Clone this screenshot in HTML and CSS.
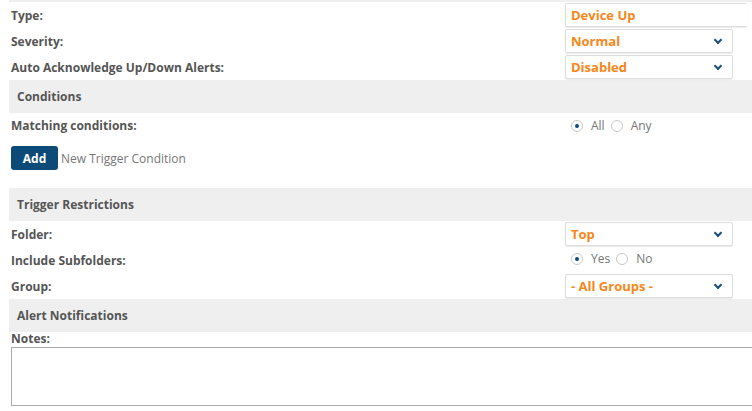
FILE: index.html
```html
<!DOCTYPE html>
<html lang="en">
<head>
  <meta charset="UTF-8" />
  <title>Trigger</title>
  <link rel="stylesheet" href="styles.css">
</head>
<body>
  <div class="form">
    <div class="strip"></div>

    <div class="row">
      <div class="label">Type:</div>
      <div class="value"><div class="select wide">Device Up</div></div>
    </div>
    <div class="row">
      <div class="label">Severity:</div>
      <div class="value"><div class="select">Normal<span class="chev"></span></div></div>
    </div>
    <div class="row">
      <div class="label">Auto Acknowledge Up/Down Alerts:</div>
      <div class="value"><div class="select">Disabled<span class="chev"></span></div></div>
    </div>

    <div class="section">Conditions</div>
    <div class="row short">
      <div class="label">Matching conditions:</div>
      <div class="value radios">
        <span class="radio checked"></span><span class="opt">All</span>
        <span class="radio"></span><span class="opt">Any</span>
      </div>
    </div>
    <div class="add-row">
      <button class="btn">Add</button>
      <span class="hint">New Trigger Condition</span>
    </div>

    <div class="section">Trigger Restrictions</div>
    <div class="row">
      <div class="label">Folder:</div>
      <div class="value"><div class="select">Top<span class="chev"></span></div></div>
    </div>
    <div class="row">
      <div class="label">Include Subfolders:</div>
      <div class="value radios up">
        <span class="radio checked"></span><span class="opt">Yes</span>
        <span class="radio"></span><span class="opt">No</span>
      </div>
    </div>
    <div class="row">
      <div class="label">Group:</div>
      <div class="value"><div class="select">- All Groups -<span class="chev"></span></div></div>
    </div>

    <div class="section">Alert Notifications</div>
    <div class="notes-label">Notes:</div>
    <div class="notes"></div>
  </div>
</body>
</html>
```

FILE: styles.css
```css
body {
  margin: 0;
  background: #fff;
  font-family: "Open Sans", Arial, sans-serif;
  font-size: 12px;
  color: #555;
  overflow: hidden;
}

.form {
  margin-left: 9px;
  width: 745px;
}

.strip {
  height: 2px;
  background: #efefef;
}

.row {
  display: flex;
  align-items: center;
  height: 26px;
  padding-left: 2px;
}

.row.short {
  height: 24px;
  padding-bottom: 1px;
}

.label {
  width: 554px;
  font-weight: bold;
  color: #555;
}

.value {
  display: flex;
  align-items: center;
}

.select {
  position: relative;
  box-sizing: border-box;
  width: 168px;
  height: 24px;
  line-height: 22px;
  padding-left: 5px;
  border: 1px solid #ddd;
  border-radius: 2px;
  box-shadow: 0 1px 1px rgba(0, 0, 0, 0.08);
  color: #f7861b;
  font-weight: bold;
  font-size: 13px;
}

.select.wide {
  width: 182px;
  border-right: none;
}

.chev {
  position: absolute;
  right: 11px;
  top: 7px;
  width: 4px;
  height: 4px;
  border-right: 2px solid #1d4f7a;
  border-bottom: 2px solid #1d4f7a;
  transform: rotate(45deg);
}

.section {
  height: 33px;
  line-height: 33px;
  padding-left: 8px;
  background: #efefef;
  font-weight: bold;
  color: #555;
}

.radios {
  padding-left: 6px;
}

.radios.up {
  margin-top: -3px;
}

.radio {
  box-sizing: border-box;
  width: 12px;
  height: 12px;
  border: 1px solid #c8c8c8;
  border-radius: 50%;
  position: relative;
  margin-top: 1px;
}

.radio.checked::after {
  content: "";
  position: absolute;
  left: 3px;
  top: 3px;
  width: 4px;
  height: 4px;
  border-radius: 50%;
  background: #0e4a78;
}

.opt {
  margin: 0 6px 0 8px;
  color: #777;
  font-size: 12px;
}

.add-row {
  display: flex;
  align-items: center;
  height: 24px;
  margin: 8px 0 18px 2px;
}

.btn {
  width: 47px;
  height: 24px;
  border: none;
  border-radius: 3px;
  background: #0e4a78;
  color: #fff;
  font-family: "Open Sans", Arial, sans-serif;
  font-weight: bold;
  font-size: 12px;
  padding: 0;
}

.hint {
  margin-left: 3px;
  color: #777;
}

.notes-label {
  padding-left: 2px;
  height: 15px;
  line-height: 13px;
  font-weight: bold;
}

.notes {
  margin-left: 2px;
  height: 59px;
  border: 1px solid #aaa;
  border-right: none;
  box-sizing: border-box;
}
```
